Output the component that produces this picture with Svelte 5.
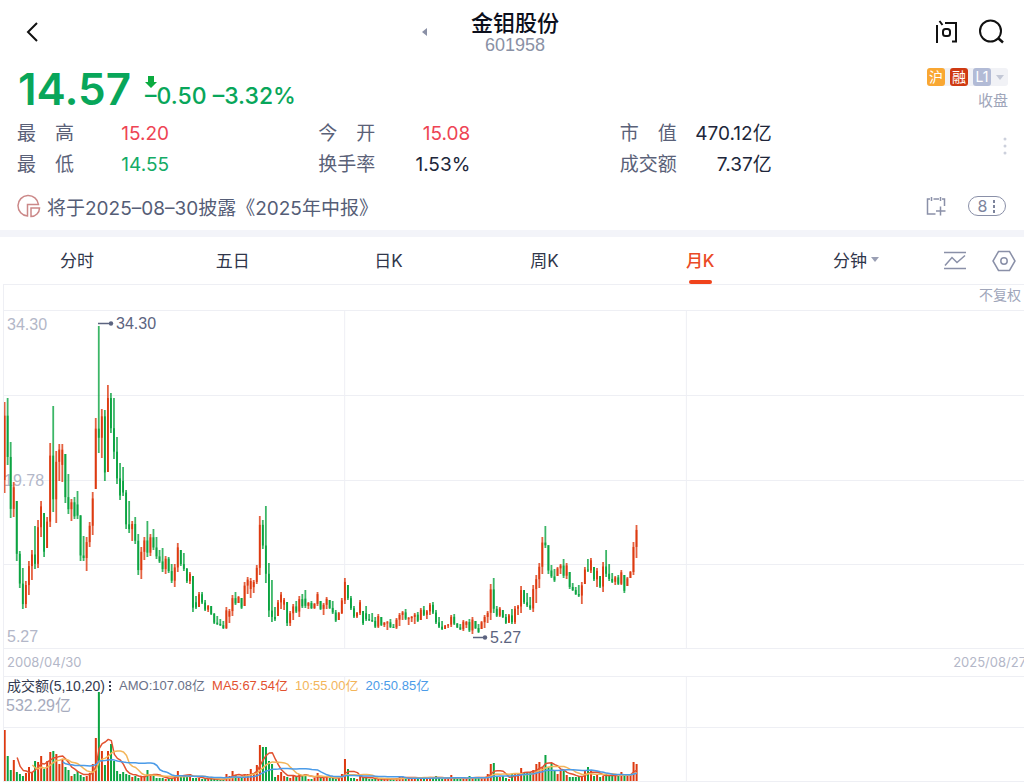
<script lang="ts">
	// one entry per month: r = up, g = down, then high, low and turnover in chart units
	const raw = `
		r402,493,51 g398,465,25 g442,518,11 r482,517,21 g501,561,9 g551,588,7 g568,609,5 r581,608,8 r561,595,14 r550,580,9
		g526,569,20 r520,568,19 r501,537,25 g513,557,12 r517,548,20 r443,527,29 g406,512,30 r451,523,27 r444,481,17 r444,482,22
		g454,503,14 g474,514,11 r499,521,5 g497,519,7 g491,519,10 g515,561,6 g536,561,4 r537,571,5 r522,547,8 r492,535,17
		r418,489,43 g326,453,89 r409,458,30 g410,481,16 r385,472,30 g393,433,37 g398,459,20 g437,484,10 g463,500,7 g467,496,9
		g490,529,7 g501,533,6 r521,541,4 g517,544,5 g534,575,3 r547,579,4 r537,560,5 g521,557,11 r534,556,7 g529,550,6
		g537,559,3 g550,563,3 g548,572,3 r556,574,2 g557,573,3 g564,583,3 r564,587,5 r543,572,10 g550,566,4 g553,571,6
		g568,583,5 r572,584,6 g576,612,3 g596,609,3 r592,607,3 g592,604,2 g600,611,2 r605,612,2 g606,615,2 g613,624,2
		g616,625,1 g619,626,1 g621,629,2 r607,629,7 r609,623,5 r595,616,10 g592,605,6 r596,603,4 g598,609,4 r582,606,7
		r577,594,7 r578,598,12 r580,593,8 r565,584,16 r516,575,36 g520,549,34 g506,583,34 g563,617,20 g580,622,17 g607,621,4
		r600,616,6 r592,609,9 r598,610,5 g602,626,4 r611,626,3 r604,620,6 g601,613,5 r596,617,7 g594,608,6 g590,608,7
		r602,609,2 g601,609,2 r603,609,3 r592,606,8 g601,610,3 r603,615,3 r597,609,4 g600,609,3 g601,614,3 g610,622,2
		r612,620,4 r598,614,7 r578,604,22 g585,600,12 g596,610,3 g606,618,3 r612,618,2 r600,615,5 g611,625,4 g606,621,3
		g614,621,2 g613,622,2 g617,628,2 r614,628,2 g617,626,2 r622,627,2 r621,630,2 g619,628,2 g624,628,2 r618,629,3
		r613,626,4 r611,620,4 g609,620,4 r617,625,3 r616,622,3 r613,624,3 g612,622,3 r608,620,4 g606,616,3 r610,619,3
		r603,615,4 g602,614,3 g610,624,5 g617,628,3 g621,630,2 r625,629,2 r624,628,2 r615,627,6 g614,625,3 g623,628,2
		g624,630,2 r620,631,3 r621,628,3 g619,632,5 r617,634,3 g621,629,3 g624,633,4 r621,629,3 r615,628,4 r611,623,7
		r584,620,17 g578,613,18 g606,617,5 r607,617,4 g610,618,5 g614,624,3 r614,623,2 g609,624,7 r606,624,8 r605,615,7
		r586,613,13 g590,604,8 g593,607,8 g597,610,9 r585,612,11 r575,603,17 r563,588,19 r537,574,14 g526,548,26 g545,574,14
		g565,578,18 g569,582,10 r567,576,7 r564,574,10 g559,578,10 r563,579,6 g572,589,4 g583,591,4 g587,595,4 g585,597,5
		r582,604,5 r567,584,10 g559,572,14 r558,573,10 g567,581,5 r568,587,6 g576,588,4 r562,592,5 g550,577,7 g564,581,6
		g573,583,5 r576,585,5 g575,585,5 r570,585,9 g575,593,6 r577,586,6 r571,578,6 r542,575,19 r525,558,17`;

	const STEP = 3.038;
	const TOP = 310;
	const VOL_BASE = 105;

	let prev = 480;
	const candles = raw.trim().split(/\s+/).map((s, i) => {
		const [high, low, vol] = s.slice(1).split(',').map(Number);
		const up = s[0] === 'r';
		const range = low - high;
		const close = up ? high + range * 0.15 : low - range * 0.12;
		let open = Math.min(low, Math.max(high, prev));
		if (up && open < close) open = close + range * 0.4;
		if (!up && open > close) open = close - range * 0.4;
		prev = close;
		return {
			x: i * STEP,
			up,
			vol,
			high: high - TOP,
			low: low - TOP,
			top: Math.min(open, close) - TOP,
			body: Math.max(1, Math.abs(open - close))
		};
	});

	function average(n: number) {
		const points: string[] = [];
		for (let i = n - 1; i < candles.length; i++) {
			let sum = 0;
			for (let j = i - n + 1; j <= i; j++) sum += candles[j].vol;
			points.push(`${candles[i].x + 1},${(VOL_BASE - sum / n).toFixed(1)}`);
		}
		return points.join(' ');
	}

	const lines = [
		{ n: 5, color: '#e2512f' },
		{ n: 10, color: '#f3b55a' },
		{ n: 20, color: '#4b9be8' }
	];

	const stats = [
		[
			{ label: '最　高', value: '15.20', tone: 'red' },
			{ label: '最　低', value: '14.55', tone: 'green' }
		],
		[
			{ label: '今　开', value: '15.08', tone: 'red' },
			{ label: '换手率', value: '1.53%', tone: '' }
		],
		[
			{ label: '市　值', value: '470.12亿', tone: '' },
			{ label: '成交额', value: '7.37亿', tone: '' }
		]
	];

	const tabs = ['分时', '五日', '日K', '周K', '月K', '分钟'];
	let active = $state('月K');
</script>

<div class="page">
	<header>
		<button class="back" aria-label="返回">
			<svg width="14" height="22" viewBox="0 0 14 22"><path d="M13 2 4 11l9 9" fill="none" stroke="#111" stroke-width="2" /></svg>
		</button>
		<div class="title">
			<button class="prev" aria-label="上一只">
				<svg width="6" height="10" viewBox="0 0 6 10"><path d="M6 1v8L1 5z" fill="#8a90a6" /></svg>
			</button>
			<div class="name">
				<h1>金钼股份</h1>
				<span>601958</span>
			</div>
		</div>
		<div class="actions">
			<button aria-label="问">
				<svg width="24" height="24" viewBox="0 0 24 24" fill="none" stroke="#111" stroke-width="2">
					<path d="M3 5v18M5.500 1l3 4M11 3h11v18.500h-4" />
					<rect x="9" y="9" width="7" height="7" rx="2.500" />
				</svg>
			</button>
			<button aria-label="搜索">
				<svg width="26" height="26" viewBox="0 0 26 26" fill="none" stroke="#111" stroke-width="2">
					<circle cx="12.500" cy="12" r="10.500" /><path d="m20 19 5 4.500" stroke-width="2.500" />
				</svg>
			</button>
		</div>
	</header>

	<section class="quote">
		<div class="price-row">
			<strong class="price">14.57</strong>
			<div class="change">
				<svg class="down" width="12" height="12" viewBox="0 0 12 12"><path d="M3 0h6v6h3l-6 6-6-6h3z" fill="#0bab3f" /></svg>
				<span>–0.50 –3.32%</span>
			</div>
			<div class="market">
				<button class="badges">
					<i class="hu">沪</i><i class="rong">融</i><i class="level">L1</i>
					<svg width="8" height="5" viewBox="0 0 8 5"><path d="M0 0h8L4 5z" fill="#c3c8d6" /></svg>
				</button>
				<span>收盘</span>
			</div>
		</div>
		<div class="stats">
			{#each stats as group}
				<dl>
					{#each group as s}
						<dt>{s.label}</dt>
						<dd class={s.tone}>{s.value}</dd>
					{/each}
				</dl>
			{/each}
			<button class="more" aria-label="更多">
				<svg width="4" height="18" viewBox="0 0 4 18" fill="#ccd0dc"><circle cx="2" cy="2" r="1.500" /><circle cx="2" cy="9" r="1.500" /><circle cx="2" cy="16" r="1.500" /></svg>
			</button>
		</div>
		<div class="notice">
			<svg width="24" height="24" viewBox="0 0 24 24" fill="none" stroke="#cb8888" stroke-width="1.500">
				<path d="M10.500 22A10.300 10.300 0 1 1 21.500 10.500H10.500z" />
				<path d="M14 14h8.500a8.500 8.500 0 0 1-8.500 8.500z" />
			</svg>
			<a href="#report">将于2025–08–30披露《2025年中报》</a>
			<button aria-label="添加日程">
				<svg width="20" height="20" viewBox="0 0 20 20" fill="none" stroke="#8a90a8" stroke-width="1.500">
					<path d="M4 3H1.500v15h8M7.500 3h5.500M16 3h2.500v7M5.500 1v4M14.500 1v4M14.500 10.500v9M10 15h9.500" />
				</svg>
			</button>
			<button class="count">8
				<svg width="3" height="13" viewBox="0 0 3 13" fill="#7d849c"><path d="M0 0h2v3H0zM0 5h2v3H0zM0 10h2v3H0z" /></svg>
			</button>
		</div>
	</section>

	<nav>
		{#each tabs as tab}
			<button class="tab" class:active={active === tab} onclick={() => (active = tab)}>
				{tab}
				{#if tab === '分钟'}
					<svg width="8" height="5" viewBox="0 0 8 5"><path d="M0 0h8L4 5z" fill="#9a9fb4" /></svg>
				{/if}
			</button>
		{/each}
		<div class="tools">
			<button aria-label="画线">
				<svg width="24" height="20" viewBox="0 0 24 20" fill="none" stroke="#8a90a8" stroke-width="1.500">
					<path d="M1 1.500h22M1 17.500h22M2 14.500l7-8 5 5 8-7" />
				</svg>
			</button>
			<button aria-label="设置">
				<svg width="24" height="22" viewBox="0 0 24 22" fill="none" stroke="#8a90a8" stroke-width="1.500">
					<path d="M6.500 1.500h11L23 11l-5.500 9.500h-11L1 11z" /><circle cx="12" cy="11" r="3.200" />
				</svg>
			</button>
		</div>
	</nav>

	<section class="charts">
		<div class="adjust"><button>不复权</button></div>
		<svg class="kline" role="img" aria-label="月K">
			<g stroke="#eeeff4">
				<path d="M0 .5h4000M0 85.500h4000M0 170.500h4000M0 254.500h4000M0 338.500h4000" />
				<line x1="33.4%" x2="33.4%" y2="100%" />
				<line x1="66.9%" x2="66.9%" y2="100%" />
			</g>
			<g class="axis">
				<text x="3" y="20">34.30</text>
				<text x="0" y="176">19.78</text>
				<text x="3" y="332">5.27</text>
			</g>
			{#each candles as c}
				<g fill={c.up ? '#dd3a10' : '#0ba441'}>
					<rect x={c.x - 0.3} y={c.high} width="1.800" height={c.low - c.high} opacity="0.800" />
					<rect x={c.x - 0.3} y={c.top} width="1.800" height={c.body} />
				</g>
			{/each}
			<g class="mark">
				<path d="M94 13.500h14M469 327.500h14" stroke="#5c6480" stroke-width="1.500" />
				<circle cx="107" cy="13.500" r="2.200" />
				<circle cx="481" cy="327.500" r="2.200" />
				<text x="112" y="19">34.30</text>
				<text x="486" y="333">5.27</text>
			</g>
		</svg>
		<div class="dates"><span>2008/04/30</span><span>2025/08/27</span></div>
		<div class="turnover">
			<svg class="bars" role="img" aria-label="成交额">
				<g stroke="#eeeff4">
					<path d="M0 .5h4000M0 51.500h4000M0 105.500h4000" />
					<line x1="33.4%" x2="33.4%" y2="100%" />
					<line x1="66.9%" x2="66.9%" y2="100%" />
				</g>
				{#each candles as c}
					<rect x={c.x - 0.3} y={VOL_BASE - c.vol} width="2" height={c.vol} fill={c.up ? '#dd3a10' : '#0ba441'} />
				{/each}
				{#each lines as l}
					<polyline points={average(l.n)} fill="none" stroke={l.color} stroke-width="1.500" stroke-linejoin="round" />
				{/each}
			</svg>
			<div class="legend">
				<button>成交额(5,10,20)
					<svg width="3" height="11" viewBox="0 0 3 11" fill="#333a50"><path d="M0 0h2v2H0zM0 4h2v2H0zM0 8h2v2H0z" /></svg>
				</button>
				<span>AMO:107.08亿</span>
				<span class="ma5">MA5:67.54亿</span>
				<span class="ma10">10:55.00亿</span>
				<span class="ma20">20:50.85亿</span>
			</div>
			<div class="max">532.29亿</div>
		</div>
	</section>
</div>

<style>
	:global(body) {
		background: #fff;
		overflow: hidden;
	}
	.page {
		font-family: Inter, 'Noto Sans CJK SC', sans-serif;
		color: #20263a;
		overflow: hidden;
	}
	button {
		display: flex;
		align-items: center;
		padding: 0;
		border: 0;
		background: none;
		font: inherit;
		color: inherit;
		white-space: nowrap;
		cursor: pointer;
	}
	svg {
		display: block;
		flex: none;
	}
	header {
		display: grid;
		grid-template-columns: 90px 1fr 90px;
		align-items: center;
		height: 64px;
	}
	.back {
		padding-left: 24px;
	}
	.title {
		display: flex;
		align-items: center;
		justify-content: center;
		gap: 44px;
		padding-right: 44px;
	}
	.name {
		text-align: center;
	}
	h1 {
		margin: 0;
		font-size: 22px;
		line-height: 26px;
		font-weight: 500;
		color: #0c0f1c;
	}
	.name span {
		display: block;
		font-family: 'Liberation Sans', sans-serif;
		font-size: 18px;
		line-height: 18px;
		color: #8a91a5;
	}
	.actions {
		display: flex;
		gap: 20px;
	}
	.price-row {
		display: flex;
		align-items: center;
		height: 50px;
		padding: 0 16px 0 18px;
		color: #08a65a;
	}
	.price {
		font-size: 44px;
		line-height: 50px;
		font-weight: 600;
	}
	.change {
		position: relative;
		margin-left: 14px;
		padding-top: 13px;
		font-size: 23px;
		line-height: 26px;
		font-weight: 500;
	}
	.down {
		position: absolute;
		left: 0;
		top: 6px;
	}
	.market {
		margin-left: auto;
		display: flex;
		flex-direction: column;
		align-items: flex-end;
		gap: 4px;
		padding-top: 2px;
		font-size: 15px;
		line-height: 22px;
		color: #a0a6ba;
	}
	.badges {
		gap: 5px;
		padding-right: 4px;
		background: #f1f2f6;
		border-radius: 3px;
	}
	.badges i {
		width: 18px;
		height: 18px;
		border-radius: 3px;
		font-size: 14px;
		line-height: 18px;
		font-style: normal;
		text-align: center;
		color: #fff;
	}
	.hu {
		background: #f9a732;
	}
	.rong {
		background: #cf3a12;
	}
	.level {
		background: #b2bbd6;
	}
	.stats {
		display: grid;
		grid-template-columns: repeat(3, 1fr) 86px;
		padding: 4px 17px 0;
		font-size: 19px;
		line-height: 31px;
	}
	dl {
		display: grid;
		grid-template-columns: auto auto;
		justify-content: space-between;
		width: 152px;
		margin: 0;
	}
	dt {
		color: #5a6178;
	}
	dd {
		margin: 0;
		text-align: right;
	}
	.red {
		color: #ee4454;
	}
	.green {
		color: #14ab66;
	}
	.more {
		justify-self: end;
		padding-bottom: 6px;
	}
	.notice {
		display: flex;
		align-items: center;
		box-sizing: border-box;
		height: 50px;
		padding: 2px 18px 0 17px;
		font-size: 19px;
	}
	.notice a {
		margin: 0 auto 0 6px;
		color: #555d76;
		text-decoration: none;
	}
	.count {
		justify-content: center;
		gap: 6px;
		width: 38px;
		height: 20px;
		margin-left: 22px;
		border: 1px solid #8a90a8;
		border-radius: 10px;
		font-size: 16px;
		color: #7d849c;
	}
	nav {
		display: flex;
		height: 47px;
		border-top: 7px solid #f3f4f9;
	}
	.tab {
		position: relative;
		flex: 1;
		justify-content: center;
		gap: 4px;
		padding: 0 2px 2px 0;
		font-size: 17px;
		color: #30364a;
	}
	.active {
		font-weight: 500;
		color: #ea4a26;
	}
	.active::after {
		content: '';
		position: absolute;
		bottom: 0;
		width: 23px;
		height: 4px;
		border-radius: 2px;
		background: #f0431c;
	}
	.tools {
		display: flex;
		justify-content: space-between;
		width: 73px;
		padding: 0 8px;
	}
	.charts {
		border-left: 1px solid #eeeff4;
		margin-left: 3px;
	}
	.adjust {
		display: flex;
		justify-content: flex-end;
		align-items: flex-start;
		height: 25px;
		padding-right: 3px;
		border-top: 1px solid #eeeff4;
		font-size: 14px;
		line-height: 20px;
		color: #a0a6ba;
	}
	.kline {
		width: 100%;
		height: 339px;
	}
	.kline text {
		font-family: 'Liberation Sans', sans-serif;
		font-size: 16px;
	}
	.axis {
		fill: #b3b7c8;
	}
	.mark {
		fill: #5c6480;
	}
	.dates {
		display: flex;
		justify-content: space-between;
		margin-right: -2px;
		padding-left: 3px;
		font-size: 13px;
		line-height: 27px;
		color: #b3b7c8;
	}
	.turnover {
		position: relative;
	}
	.bars {
		width: 100%;
		height: 106px;
	}
	.legend {
		position: absolute;
		top: 0;
		left: 3px;
		display: flex;
		gap: 7px;
		font-family: 'Liberation Sans', 'Noto Sans CJK SC', sans-serif;
		font-size: 13px;
		line-height: 20px;
		color: #6a7188;
	}
	.legend button {
		gap: 4px;
		font-size: 14px;
		color: #333a50;
	}
	.ma5 {
		color: #e2512f;
	}
	.ma10 {
		color: #f3b55a;
	}
	.ma20 {
		color: #4b9be8;
	}
	.max {
		position: absolute;
		top: 20px;
		left: 2px;
		font-family: 'Liberation Sans', 'Noto Sans CJK SC', sans-serif;
		font-size: 16px;
		line-height: 20px;
		color: #a6abbd;
	}
</style>
